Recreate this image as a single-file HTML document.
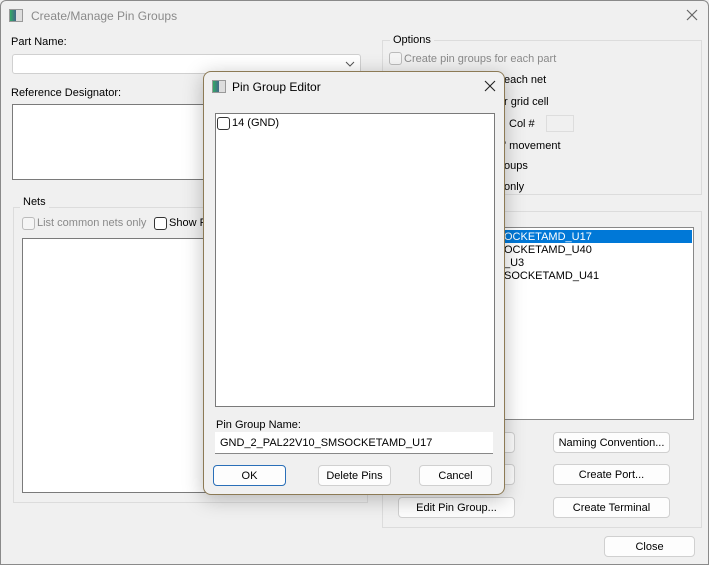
<!DOCTYPE html>
<html><head><style>
*{box-sizing:border-box;margin:0;padding:0}
body{width:709px;height:565px;background:#f0f0f0;font-family:"Liberation Sans",sans-serif;font-size:11px;color:#000;position:relative;overflow:hidden}
.a{position:absolute}
.win{left:0;top:0;width:709px;height:565px;border:1px solid #8a8a8a;border-radius:6px 6px 0 0;background:#f0f0f0}
.box{background:#fff;border:1px solid #7a7a7a}
.grp{border:1px solid #dcdcdc}
.gl{background:#f0f0f0;padding:0 3px}
.cb{width:13px;height:13px;border:1px solid #333;border-radius:3px;background:#fff}
.cbd{border-color:#bbb;background:#f5f5f5}
.btn{border:1px solid #d0d0d0;border-radius:4px;background:#fdfdfd;text-align:center;line-height:20px}
.dis{color:#8a8a8a}
</style></head><body>
<div class="a win"></div>
<div class="a" style="left:9px;top:9px;width:14px;height:13px;border:1px solid #999;background:linear-gradient(90deg,#3a6 0,#468 50%,#ddd 50%)"></div>
<div class="a dis" style="left:31px;top:9px;font-size:12px">Create/Manage Pin Groups</div>
<svg class="a" style="left:686px;top:9px" width="12" height="12"><path d="M1 1L11 11M11 1L1 11" stroke="#666" stroke-width="1.2"/></svg>

<div class="a" style="left:11px;top:36px">Part Name:</div>
<div class="a box" style="left:12px;top:54px;width:349px;height:20px;border-color:#d0d0d0;border-radius:3px"></div>
<svg class="a" style="left:345px;top:61px" width="10" height="6"><path d="M1 1L5 5L9 1" stroke="#555" fill="none"/></svg>
<div class="a" style="left:11px;top:87px">Reference Designator:</div>
<div class="a box" style="left:12px;top:104px;width:220px;height:76px"></div>

<div class="a grp" style="left:13px;top:207px;width:355px;height:296px"></div>
<div class="a gl" style="left:20px;top:196px">Nets</div>
<div class="a cb cbd" style="left:22px;top:217px"></div>
<div class="a dis" style="left:37px;top:217px">List common nets only</div>
<div class="a cb" style="left:154px;top:217px"></div>
<div class="a" style="left:169px;top:217px">Show P</div>
<div class="a box" style="left:22px;top:238px;width:200px;height:255px"></div>

<div class="a grp" style="left:382px;top:40px;width:320px;height:155px"></div>
<div class="a gl" style="left:390px;top:34px">Options</div>
<div class="a cb cbd" style="left:389px;top:52px"></div>
<div class="a dis" style="left:404px;top:53px">Create pin groups for each part</div>
<div class="a" style="left:504px;top:74px">each net</div>
<div class="a" style="left:504px;top:96px">r grid cell</div>
<div class="a" style="left:509px;top:118px">Col #</div>
<div class="a" style="left:546px;top:115px;width:28px;height:17px;border:1px solid #ddd;background:#f0f0f0"></div>
<div class="a" style="left:504px;top:140px">' movement</div>
<div class="a" style="left:504px;top:160px">oups</div>
<div class="a" style="left:504px;top:181px">only</div>

<div class="a grp" style="left:382px;top:211px;width:320px;height:317px"></div>
<div class="a box" style="left:490px;top:227px;width:204px;height:193px;border-color:#888"></div>
<div class="a" style="left:491px;top:230px;width:201px;height:13px;background:#0078d7"></div>
<div class="a" style="left:504px;top:231px;color:#fff;line-height:13px">OCKETAMD_U17</div>
<div class="a" style="left:504px;top:244px;line-height:13px">OCKETAMD_U40</div>
<div class="a" style="left:504px;top:257px;line-height:13px">_U3</div>
<div class="a" style="left:504px;top:270px;line-height:13px">SOCKETAMD_U41</div>

<div class="a btn" style="left:398px;top:432px;width:117px;height:21px"></div>
<div class="a btn" style="left:398px;top:464px;width:117px;height:21px"></div>
<div class="a btn" style="left:398px;top:497px;width:117px;height:21px">Edit Pin Group...</div>
<div class="a btn" style="left:553px;top:432px;width:117px;height:21px">Naming Convention...</div>
<div class="a btn" style="left:553px;top:464px;width:117px;height:21px">Create Port...</div>
<div class="a btn" style="left:553px;top:497px;width:117px;height:21px">Create Terminal</div>
<div class="a btn" style="left:604px;top:536px;width:91px;height:21px">Close</div>

<div class="a" style="left:203px;top:71px;width:302px;height:424px;border:1px solid #8c7a55;border-radius:8px;background:#f0f0f0;box-shadow:0 4px 20px rgba(0,0,0,.25)"></div>
<div class="a" style="left:212px;top:80px;width:14px;height:13px;border:1px solid #999;background:linear-gradient(90deg,#3a6 0,#468 50%,#ddd 50%)"></div>
<div class="a" style="left:232px;top:80px;font-size:12px">Pin Group Editor</div>
<svg class="a" style="left:484px;top:80px" width="12" height="12"><path d="M1 1L11 11M11 1L1 11" stroke="#222" stroke-width="1.1"/></svg>
<div class="a box" style="left:215px;top:113px;width:280px;height:294px"></div>
<div class="a cb" style="left:217px;top:117px"></div>
<div class="a" style="left:232px;top:117px">14 (GND)</div>
<div class="a" style="left:216px;top:419px">Pin Group Name:</div>
<div class="a" style="left:215px;top:432px;width:278px;height:22px;background:#fff;border-bottom:1px solid #888"></div>
<div class="a" style="left:220px;top:437px">GND_2_PAL22V10_SMSOCKETAMD_U17</div>
<div class="a btn" style="left:213px;top:465px;width:73px;height:21px;border-color:#2a6fb8">OK</div>
<div class="a btn" style="left:318px;top:465px;width:73px;height:21px">Delete Pins</div>
<div class="a btn" style="left:419px;top:465px;width:73px;height:21px">Cancel</div>
</body></html>
